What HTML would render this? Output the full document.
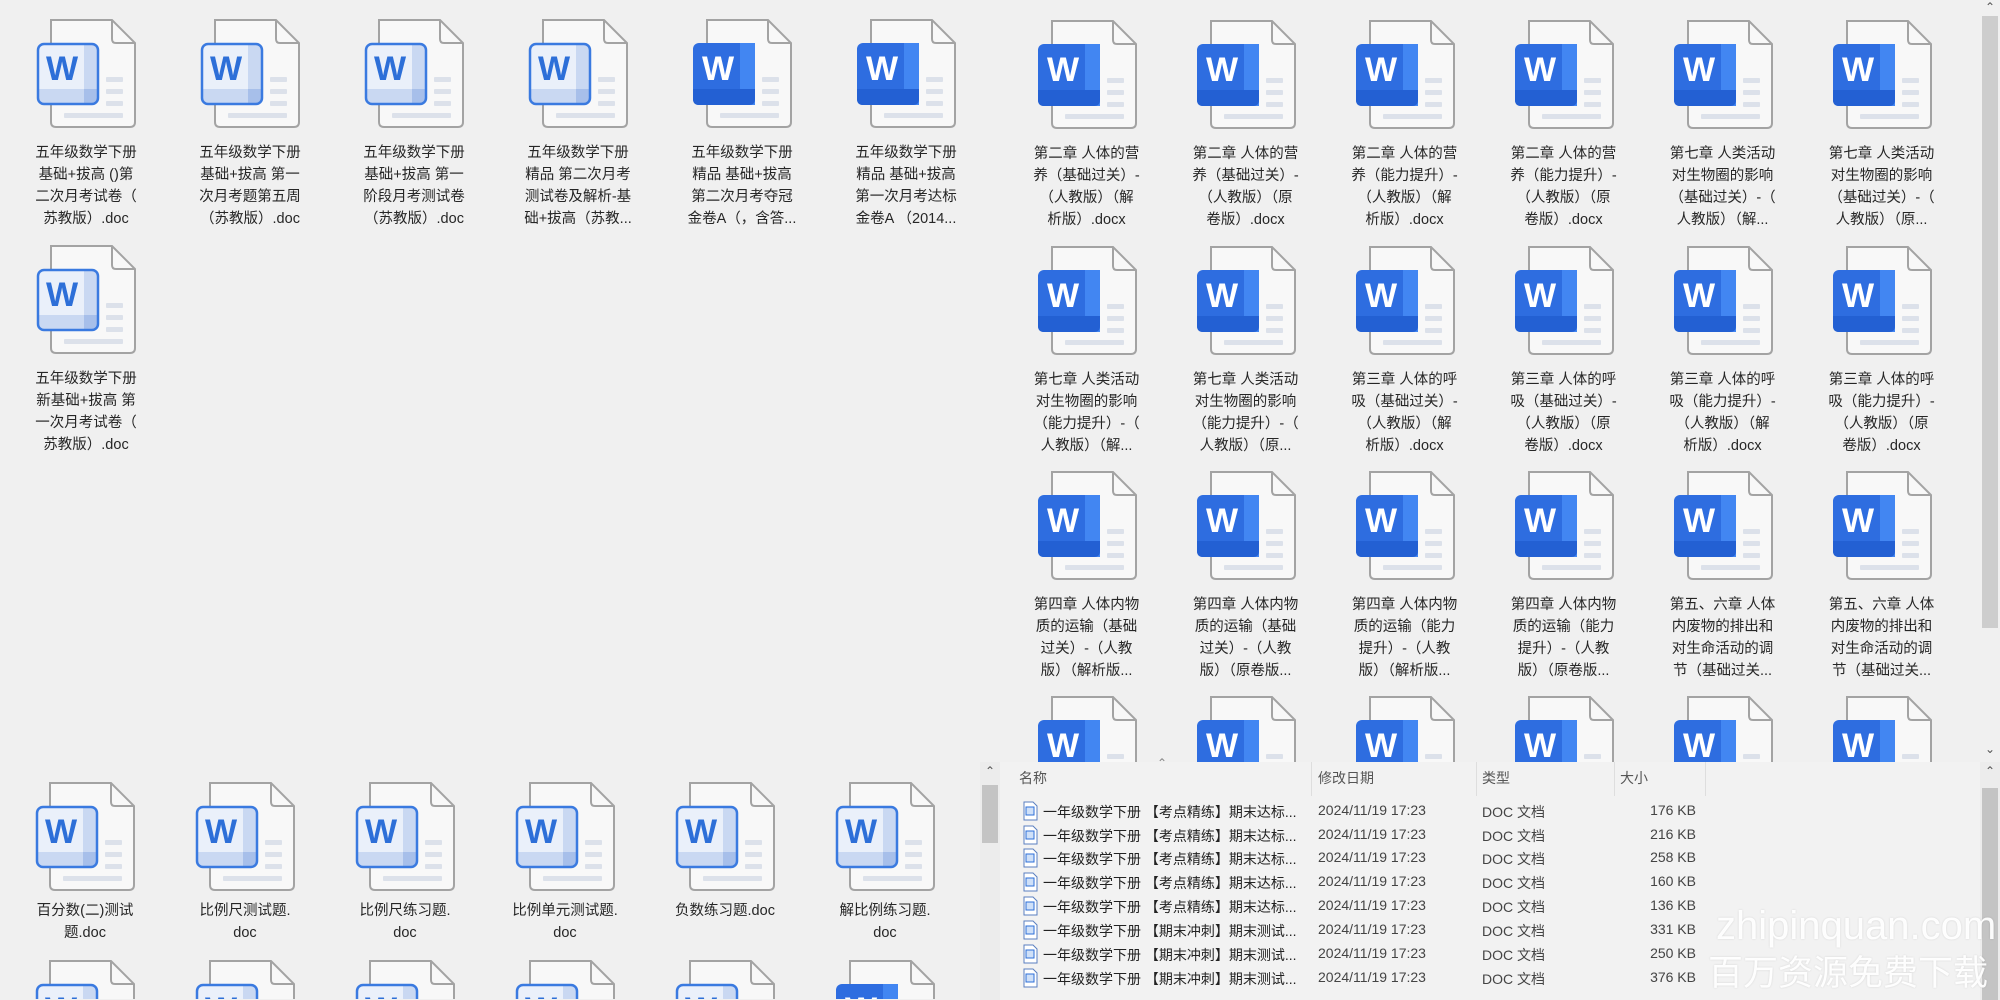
<!DOCTYPE html>
<html><head><meta charset="utf-8">
<style>
*{margin:0;padding:0;box-sizing:border-box}
html{width:2000px;height:1000px;overflow:hidden}
body{width:2000px;height:1000px;overflow:hidden;background:#f0f0f0;font-family:"Liberation Sans","Noto Sans CJK SC",sans-serif;position:relative}
.win{position:absolute;overflow:hidden}
.grid{position:absolute}
.t{position:absolute;height:226px}
.t.s{height:40px;overflow:hidden}
.t.m{height:67px;overflow:hidden}
.t svg{position:absolute;top:0;left:50%;margin-left:-50px}
.t .l{position:absolute;top:124px;left:0;right:0;text-align:center;font-size:14.5px;line-height:22px;color:#262626;white-space:nowrap}
.wl{font:bold 34px "Liberation Sans",sans-serif}
.sb{position:absolute;background:#f0f0f0}
.thumb{position:absolute;background:#cdcdcd}
.arr{position:absolute;font-size:12px;color:#555;width:20px;text-align:center}
.hd{position:absolute;top:768px;font-size:14px;color:#555}
.sep{position:absolute;top:762px;width:1px;height:34px;background:#dedede}
.row{position:absolute;left:20px;width:720px;height:24px;font-size:14px;color:#444;white-space:nowrap;overflow:hidden}
.row span{position:absolute;top:3px}
.row .n{left:43px;color:#222}
.row .d{left:318px}
.row .ty{left:482px}
.row .s{left:600px;width:96px;text-align:right}
.row svg{position:absolute;left:22px;top:2px}
.wm{position:absolute;line-height:1;color:rgba(255,255,255,.95);text-shadow:0 0 2px rgba(0,0,0,.12);font-family:"Liberation Sans","Noto Sans CJK SC",sans-serif;white-space:nowrap}
</style></head><body>
<svg width="0" height="0" style="position:absolute">
<defs>
<symbol id="pg" viewBox="0 0 102 112">
<path d="M15 2H76L99 25V104Q99 109 94 109H20Q15 109 15 104Z" fill="#f8f8f8" stroke="#a3a3a3" stroke-width="2"/>
<path d="M76 2V21Q76 25 80 25H99" fill="none" stroke="#a3a3a3" stroke-width="2"/>
<rect x="70" y="59" width="17" height="5" rx="1" fill="#dce1ea"/>
<rect x="70" y="71" width="17" height="5" rx="1" fill="#dce1ea"/>
<rect x="70" y="83" width="17" height="5" rx="1" fill="#dce1ea"/>
<rect x="28" y="95" width="59" height="5" rx="1" fill="#dce1ea"/>
</symbol>
<symbol id="lt" viewBox="0 0 102 112">
<use href="#pg"/>
<rect x="2" y="26" width="60" height="60" rx="6" fill="#eaf0fa"/>
<rect x="48" y="27" width="13" height="58" fill="#c9d8f2"/>
<rect x="3" y="71" width="58" height="14" fill="#c9d8f2"/>
<rect x="48" y="71" width="13" height="14" fill="#a7bfea"/>
<rect x="2" y="26" width="60" height="60" rx="6" fill="none" stroke="#3a7ae0" stroke-width="2.5"/>
</symbol>
<symbol id="dk" viewBox="0 0 102 112">
<use href="#pg"/>
<rect x="1" y="25" width="62" height="62" rx="6" fill="#2e6de0"/>
<rect x="48" y="25" width="15" height="62" fill="#4286f2"/>
<path d="M1 71H63V81Q63 87 57 87H7Q1 87 1 81Z" fill="#2360d3"/>
</symbol>
</defs></svg>

<div class="win" style="left:0;top:0;width:1980px;height:762px">
 <div class="grid" style="left:4px;top:18px">
  <div class="t" style="left:0;top:0;width:164px"><svg width="102" height="112"><use href="#lt"/><text x="26" y="62" text-anchor="middle" class="wl" fill="#2d6fd8">W</text></svg><div class="l">五年级数学下册<br>基础+拔高 ()第<br>二次月考试卷（<br>苏教版）.doc</div></div>
  <div class="t" style="left:164px;top:0;width:164px"><svg width="102" height="112"><use href="#lt"/><text x="26" y="62" text-anchor="middle" class="wl" fill="#2d6fd8">W</text></svg><div class="l">五年级数学下册<br>基础+拔高 第一<br>次月考题第五周<br>（苏教版）.doc</div></div>
  <div class="t" style="left:328px;top:0;width:164px"><svg width="102" height="112"><use href="#lt"/><text x="26" y="62" text-anchor="middle" class="wl" fill="#2d6fd8">W</text></svg><div class="l">五年级数学下册<br>基础+拔高 第一<br>阶段月考测试卷<br>（苏教版）.doc</div></div>
  <div class="t" style="left:492px;top:0;width:164px"><svg width="102" height="112"><use href="#lt"/><text x="26" y="62" text-anchor="middle" class="wl" fill="#2d6fd8">W</text></svg><div class="l">五年级数学下册<br>精品 第二次月考<br>测试卷及解析-基<br>础+拔高（苏教...</div></div>
  <div class="t" style="left:656px;top:0;width:164px"><svg width="102" height="112"><use href="#dk"/><text x="26" y="62" text-anchor="middle" class="wl" fill="#fff">W</text></svg><div class="l">五年级数学下册<br>精品 基础+拔高<br>第二次月考夺冠<br>金卷A（，含答...</div></div>
  <div class="t" style="left:820px;top:0;width:164px"><svg width="102" height="112"><use href="#dk"/><text x="26" y="62" text-anchor="middle" class="wl" fill="#fff">W</text></svg><div class="l">五年级数学下册<br>精品 基础+拔高<br>第一次月考达标<br>金卷A （2014...</div></div>
  <div class="t" style="left:0;top:226px;width:164px"><svg width="102" height="112"><use href="#lt"/><text x="26" y="62" text-anchor="middle" class="wl" fill="#2d6fd8">W</text></svg><div class="l">五年级数学下册<br>新基础+拔高 第<br>一次月考试卷（<br>苏教版）.doc</div></div>
 </div>

 <div class="grid" style="left:1007px;top:19px">
  <div class="t" style="left:0;top:0;width:159px"><svg width="102" height="112"><use href="#dk"/><text x="26" y="62" text-anchor="middle" class="wl" fill="#fff">W</text></svg><div class="l">第二章 人体的营<br>养（基础过关）-<br>（人教版）（解<br>析版）.docx</div></div>
  <div class="t" style="left:159px;top:0;width:159px"><svg width="102" height="112"><use href="#dk"/><text x="26" y="62" text-anchor="middle" class="wl" fill="#fff">W</text></svg><div class="l">第二章 人体的营<br>养（基础过关）-<br>（人教版）（原<br>卷版）.docx</div></div>
  <div class="t" style="left:318px;top:0;width:159px"><svg width="102" height="112"><use href="#dk"/><text x="26" y="62" text-anchor="middle" class="wl" fill="#fff">W</text></svg><div class="l">第二章 人体的营<br>养（能力提升）-<br>（人教版）（解<br>析版）.docx</div></div>
  <div class="t" style="left:477px;top:0;width:159px"><svg width="102" height="112"><use href="#dk"/><text x="26" y="62" text-anchor="middle" class="wl" fill="#fff">W</text></svg><div class="l">第二章 人体的营<br>养（能力提升）-<br>（人教版）（原<br>卷版）.docx</div></div>
  <div class="t" style="left:636px;top:0;width:159px"><svg width="102" height="112"><use href="#dk"/><text x="26" y="62" text-anchor="middle" class="wl" fill="#fff">W</text></svg><div class="l">第七章 人类活动<br>对生物圈的影响<br>（基础过关）-（<br>人教版）（解...</div></div>
  <div class="t" style="left:795px;top:0;width:159px"><svg width="102" height="112"><use href="#dk"/><text x="26" y="62" text-anchor="middle" class="wl" fill="#fff">W</text></svg><div class="l">第七章 人类活动<br>对生物圈的影响<br>（基础过关）-（<br>人教版）（原...</div></div>

  <div class="t" style="left:0;top:226px;width:159px"><svg width="102" height="112"><use href="#dk"/><text x="26" y="62" text-anchor="middle" class="wl" fill="#fff">W</text></svg><div class="l">第七章 人类活动<br>对生物圈的影响<br>（能力提升）-（<br>人教版）（解...</div></div>
  <div class="t" style="left:159px;top:226px;width:159px"><svg width="102" height="112"><use href="#dk"/><text x="26" y="62" text-anchor="middle" class="wl" fill="#fff">W</text></svg><div class="l">第七章 人类活动<br>对生物圈的影响<br>（能力提升）-（<br>人教版）（原...</div></div>
  <div class="t" style="left:318px;top:226px;width:159px"><svg width="102" height="112"><use href="#dk"/><text x="26" y="62" text-anchor="middle" class="wl" fill="#fff">W</text></svg><div class="l">第三章 人体的呼<br>吸（基础过关）-<br>（人教版）（解<br>析版）.docx</div></div>
  <div class="t" style="left:477px;top:226px;width:159px"><svg width="102" height="112"><use href="#dk"/><text x="26" y="62" text-anchor="middle" class="wl" fill="#fff">W</text></svg><div class="l">第三章 人体的呼<br>吸（基础过关）-<br>（人教版）（原<br>卷版）.docx</div></div>
  <div class="t" style="left:636px;top:226px;width:159px"><svg width="102" height="112"><use href="#dk"/><text x="26" y="62" text-anchor="middle" class="wl" fill="#fff">W</text></svg><div class="l">第三章 人体的呼<br>吸（能力提升）-<br>（人教版）（解<br>析版）.docx</div></div>
  <div class="t" style="left:795px;top:226px;width:159px"><svg width="102" height="112"><use href="#dk"/><text x="26" y="62" text-anchor="middle" class="wl" fill="#fff">W</text></svg><div class="l">第三章 人体的呼<br>吸（能力提升）-<br>（人教版）（原<br>卷版）.docx</div></div>

  <div class="t" style="left:0;top:451px;width:159px"><svg width="102" height="112"><use href="#dk"/><text x="26" y="62" text-anchor="middle" class="wl" fill="#fff">W</text></svg><div class="l">第四章 人体内物<br>质的运输（基础<br>过关）-（人教<br>版）（解析版...</div></div>
  <div class="t" style="left:159px;top:451px;width:159px"><svg width="102" height="112"><use href="#dk"/><text x="26" y="62" text-anchor="middle" class="wl" fill="#fff">W</text></svg><div class="l">第四章 人体内物<br>质的运输（基础<br>过关）-（人教<br>版）（原卷版...</div></div>
  <div class="t" style="left:318px;top:451px;width:159px"><svg width="102" height="112"><use href="#dk"/><text x="26" y="62" text-anchor="middle" class="wl" fill="#fff">W</text></svg><div class="l">第四章 人体内物<br>质的运输（能力<br>提升）-（人教<br>版）（解析版...</div></div>
  <div class="t" style="left:477px;top:451px;width:159px"><svg width="102" height="112"><use href="#dk"/><text x="26" y="62" text-anchor="middle" class="wl" fill="#fff">W</text></svg><div class="l">第四章 人体内物<br>质的运输（能力<br>提升）-（人教<br>版）（原卷版...</div></div>
  <div class="t" style="left:636px;top:451px;width:159px"><svg width="102" height="112"><use href="#dk"/><text x="26" y="62" text-anchor="middle" class="wl" fill="#fff">W</text></svg><div class="l">第五、六章 人体<br>内废物的排出和<br>对生命活动的调<br>节（基础过关...</div></div>
  <div class="t" style="left:795px;top:451px;width:159px"><svg width="102" height="112"><use href="#dk"/><text x="26" y="62" text-anchor="middle" class="wl" fill="#fff">W</text></svg><div class="l">第五、六章 人体<br>内废物的排出和<br>对生命活动的调<br>节（基础过关...</div></div>

  <div class="t m" style="left:0;top:676px;width:159px"><svg width="102" height="67"><use href="#dk" width="102" height="112"/><text x="26" y="62" text-anchor="middle" class="wl" fill="#fff">W</text></svg></div>
  <div class="t m" style="left:159px;top:676px;width:159px"><svg width="102" height="67"><use href="#dk" width="102" height="112"/><text x="26" y="62" text-anchor="middle" class="wl" fill="#fff">W</text></svg></div>
  <div class="t m" style="left:318px;top:676px;width:159px"><svg width="102" height="67"><use href="#dk" width="102" height="112"/><text x="26" y="62" text-anchor="middle" class="wl" fill="#fff">W</text></svg></div>
  <div class="t m" style="left:477px;top:676px;width:159px"><svg width="102" height="67"><use href="#dk" width="102" height="112"/><text x="26" y="62" text-anchor="middle" class="wl" fill="#fff">W</text></svg></div>
  <div class="t m" style="left:636px;top:676px;width:159px"><svg width="102" height="67"><use href="#dk" width="102" height="112"/><text x="26" y="62" text-anchor="middle" class="wl" fill="#fff">W</text></svg></div>
  <div class="t m" style="left:795px;top:676px;width:159px"><svg width="102" height="67"><use href="#dk" width="102" height="112"/><text x="26" y="62" text-anchor="middle" class="wl" fill="#fff">W</text></svg></div>
 </div>
</div>
<div class="sb" style="left:1980px;top:0;width:20px;height:762px;background:#f0f0f0"></div>
<div class="thumb" style="left:1982px;top:16px;width:16px;height:612px"></div>
<div class="arr" style="left:1980px;top:0">&#8963;</div>
<div class="arr" style="left:1980px;top:742px">&#8964;</div>

<div class="win" style="left:0;top:762px;width:980px;height:238px">
 <div class="grid" style="left:5px;top:19px">
  <div class="t" style="left:0;top:0;width:160px;height:170px"><svg width="102" height="112"><use href="#lt"/><text x="26" y="62" text-anchor="middle" class="wl" fill="#2d6fd8">W</text></svg><div class="l" style="top:119px">百分数(二)测试<br>题.doc</div></div>
  <div class="t" style="left:160px;top:0;width:160px;height:170px"><svg width="102" height="112"><use href="#lt"/><text x="26" y="62" text-anchor="middle" class="wl" fill="#2d6fd8">W</text></svg><div class="l" style="top:119px">比例尺测试题.<br>doc</div></div>
  <div class="t" style="left:320px;top:0;width:160px;height:170px"><svg width="102" height="112"><use href="#lt"/><text x="26" y="62" text-anchor="middle" class="wl" fill="#2d6fd8">W</text></svg><div class="l" style="top:119px">比例尺练习题.<br>doc</div></div>
  <div class="t" style="left:480px;top:0;width:160px;height:170px"><svg width="102" height="112"><use href="#lt"/><text x="26" y="62" text-anchor="middle" class="wl" fill="#2d6fd8">W</text></svg><div class="l" style="top:119px">比例单元测试题.<br>doc</div></div>
  <div class="t" style="left:640px;top:0;width:160px;height:170px"><svg width="102" height="112"><use href="#lt"/><text x="26" y="62" text-anchor="middle" class="wl" fill="#2d6fd8">W</text></svg><div class="l" style="top:119px">负数练习题.doc</div></div>
  <div class="t" style="left:800px;top:0;width:160px;height:170px"><svg width="102" height="112"><use href="#lt"/><text x="26" y="62" text-anchor="middle" class="wl" fill="#2d6fd8">W</text></svg><div class="l" style="top:119px">解比例练习题.<br>doc</div></div>
  <div class="t s" style="left:0;top:178px;width:160px"><svg width="102" height="40"><use href="#lt" width="102" height="112"/><text x="26" y="62" text-anchor="middle" class="wl" fill="#2d6fd8">W</text></svg></div>
  <div class="t s" style="left:160px;top:178px;width:160px"><svg width="102" height="40"><use href="#lt" width="102" height="112"/><text x="26" y="62" text-anchor="middle" class="wl" fill="#2d6fd8">W</text></svg></div>
  <div class="t s" style="left:320px;top:178px;width:160px"><svg width="102" height="40"><use href="#lt" width="102" height="112"/><text x="26" y="62" text-anchor="middle" class="wl" fill="#2d6fd8">W</text></svg></div>
  <div class="t s" style="left:480px;top:178px;width:160px"><svg width="102" height="40"><use href="#lt" width="102" height="112"/><text x="26" y="62" text-anchor="middle" class="wl" fill="#2d6fd8">W</text></svg></div>
  <div class="t s" style="left:640px;top:178px;width:160px"><svg width="102" height="40"><use href="#lt" width="102" height="112"/><text x="26" y="62" text-anchor="middle" class="wl" fill="#2d6fd8">W</text></svg></div>
  <div class="t s" style="left:800px;top:178px;width:160px"><svg width="102" height="40"><use href="#dk" width="102" height="112"/><text x="26" y="62" text-anchor="middle" class="wl" fill="#fff">W</text></svg></div>
 </div>
</div>

<div class="win" style="left:980px;top:762px;width:1020px;height:238px;background:#f2f2f2">
<div class="row" style="top:37px"><svg width="16" height="20"><path d="M2 1H11L15 5V19H2Z" fill="#fff" stroke="#5a7fc0" stroke-width="1"/><rect x="4" y="6" width="8" height="8" fill="#cfe0f8" stroke="#2d6fd8"/></svg><span class="n">一年级数学下册 【考点精练】期末达标...</span><span class="d">2024/11/19 17:23</span><span class="ty">DOC 文档</span><span class="s">176 KB</span></div>
<div class="row" style="top:61px"><svg width="16" height="20"><path d="M2 1H11L15 5V19H2Z" fill="#fff" stroke="#5a7fc0" stroke-width="1"/><rect x="4" y="6" width="8" height="8" fill="#cfe0f8" stroke="#2d6fd8"/></svg><span class="n">一年级数学下册 【考点精练】期末达标...</span><span class="d">2024/11/19 17:23</span><span class="ty">DOC 文档</span><span class="s">216 KB</span></div>
<div class="row" style="top:84px"><svg width="16" height="20"><path d="M2 1H11L15 5V19H2Z" fill="#fff" stroke="#5a7fc0" stroke-width="1"/><rect x="4" y="6" width="8" height="8" fill="#cfe0f8" stroke="#2d6fd8"/></svg><span class="n">一年级数学下册 【考点精练】期末达标...</span><span class="d">2024/11/19 17:23</span><span class="ty">DOC 文档</span><span class="s">258 KB</span></div>
<div class="row" style="top:108px"><svg width="16" height="20"><path d="M2 1H11L15 5V19H2Z" fill="#fff" stroke="#5a7fc0" stroke-width="1"/><rect x="4" y="6" width="8" height="8" fill="#cfe0f8" stroke="#2d6fd8"/></svg><span class="n">一年级数学下册 【考点精练】期末达标...</span><span class="d">2024/11/19 17:23</span><span class="ty">DOC 文档</span><span class="s">160 KB</span></div>
<div class="row" style="top:132px"><svg width="16" height="20"><path d="M2 1H11L15 5V19H2Z" fill="#fff" stroke="#5a7fc0" stroke-width="1"/><rect x="4" y="6" width="8" height="8" fill="#cfe0f8" stroke="#2d6fd8"/></svg><span class="n">一年级数学下册 【考点精练】期末达标...</span><span class="d">2024/11/19 17:23</span><span class="ty">DOC 文档</span><span class="s">136 KB</span></div>
<div class="row" style="top:156px"><svg width="16" height="20"><path d="M2 1H11L15 5V19H2Z" fill="#fff" stroke="#5a7fc0" stroke-width="1"/><rect x="4" y="6" width="8" height="8" fill="#cfe0f8" stroke="#2d6fd8"/></svg><span class="n">一年级数学下册 【期末冲刺】期末测试...</span><span class="d">2024/11/19 17:23</span><span class="ty">DOC 文档</span><span class="s">331 KB</span></div>
<div class="row" style="top:180px"><svg width="16" height="20"><path d="M2 1H11L15 5V19H2Z" fill="#fff" stroke="#5a7fc0" stroke-width="1"/><rect x="4" y="6" width="8" height="8" fill="#cfe0f8" stroke="#2d6fd8"/></svg><span class="n">一年级数学下册 【期末冲刺】期末测试...</span><span class="d">2024/11/19 17:23</span><span class="ty">DOC 文档</span><span class="s">250 KB</span></div>
<div class="row" style="top:204px"><svg width="16" height="20"><path d="M2 1H11L15 5V19H2Z" fill="#fff" stroke="#5a7fc0" stroke-width="1"/><rect x="4" y="6" width="8" height="8" fill="#cfe0f8" stroke="#2d6fd8"/></svg><span class="n">一年级数学下册 【期末冲刺】期末测试...</span><span class="d">2024/11/19 17:23</span><span class="ty">DOC 文档</span><span class="s">376 KB</span></div>
</div>
<div class="sb" style="left:980px;top:762px;width:20px;height:238px;background:#ececec"></div>
<div class="thumb" style="left:982px;top:785px;width:16px;height:58px;background:#c4c4c4"></div>
<div class="arr" style="left:980px;top:764px">&#8963;</div>
<div class="sb" style="left:1980px;top:762px;width:20px;height:238px;background:#ececec"></div>
<div class="thumb" style="left:1982px;top:788px;width:16px;height:212px;background:#c4c4c4"></div>
<div class="arr" style="left:1980px;top:764px">&#8963;</div>
<div class="arr" style="left:1152px;top:756px;color:#888">&#8963;</div>
<div class="hd" style="left:1019px">名称</div>
<div class="hd" style="left:1318px">修改日期</div>
<div class="hd" style="left:1482px">类型</div>
<div class="hd" style="left:1620px">大小</div>
<div class="sep" style="left:1311px"></div>
<div class="sep" style="left:1476px"></div>
<div class="sep" style="left:1614px"></div>
<div class="sep" style="left:1705px"></div>

<div class="wm" style="left:1716px;top:906px;font-size:40px">zhipinquan.com</div>
<div class="wm" style="left:1708px;top:956px;font-size:35px">百万资源免费下载</div>
</body></html>
